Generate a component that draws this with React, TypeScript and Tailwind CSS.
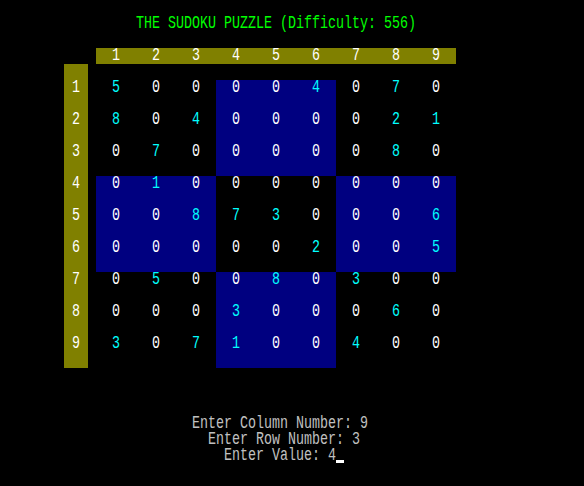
import React from 'react';

const board: number[][] = [
  [5, 0, 0, 0, 0, 4, 0, 7, 0],
  [8, 0, 4, 0, 0, 0, 0, 2, 1],
  [0, 7, 0, 0, 0, 0, 0, 8, 0],
  [0, 1, 0, 0, 0, 0, 0, 0, 0],
  [0, 0, 8, 7, 3, 0, 0, 0, 6],
  [0, 0, 0, 0, 0, 2, 0, 0, 5],
  [0, 5, 0, 0, 8, 0, 3, 0, 0],
  [0, 0, 0, 3, 0, 0, 0, 6, 0],
  [3, 0, 7, 1, 0, 0, 4, 0, 0],
];

const nums = [1, 2, 3, 4, 5, 6, 7, 8, 9];

// console glyphs are tall and narrow: 8px pitch, stretched vertically
function Glyphs({ children, className = '' }: { children: React.ReactNode; className?: string }) {
  return <span className={`inline-block scale-y-[1.4] ${className}`}>{children}</span>;
}

export default function App() {
  return (
    <div
      className="w-[584px] h-[486px] bg-black overflow-hidden text-[13.333px] leading-4 whitespace-pre"
      style={{ fontFamily: '"Liberation Mono", "DejaVu Sans Mono", monospace' }}
    >
      {/* Title */}
      <div className="pt-4 h-8 pl-[136px] text-[#00ff00]">
        <Glyphs>THE SUDOKU PUZZLE (Difficulty: 556)</Glyphs>
      </div>

      {/* Column header */}
      <div className="mt-4 ml-[96px] w-[360px] h-4 bg-[#808000] flex text-white">
        {nums.map((n) => (
          <div key={n} className="w-10 text-center">
            <Glyphs>{n}</Glyphs>
          </div>
        ))}
      </div>

      <div className="flex ml-16 gap-2">
        {/* Row header */}
        <div className="w-6 h-[304px] bg-[#808000] pt-4 text-white">
          {nums.map((n) => (
            <div key={n} className="h-8 text-center">
              <Glyphs>{n}</Glyphs>
            </div>
          ))}
        </div>

        {/* Grid */}
        <div className="pt-4">
          {board.map((row, r) => (
            <div key={r} className="flex">
              {row.map((v, c) => {
                const blue = (Math.floor(r / 3) + Math.floor(c / 3)) % 2 === 1;
                return (
                  <div
                    key={c}
                    className={`w-10 h-8 text-center ${blue ? 'bg-[#000080]' : 'bg-black'} ${
                      v ? 'text-[#00ffff]' : 'text-white'
                    }`}
                  >
                    <Glyphs>{v}</Glyphs>
                  </div>
                );
              })}
            </div>
          ))}
        </div>
      </div>

      {/* Prompts */}
      <div className="mt-12 text-[#c0c0c0]">
        <div className="h-4 pl-[192px]">
          <Glyphs>Enter Column Number: 9</Glyphs>
        </div>
        <div className="h-4 pl-[208px]">
          <Glyphs>Enter Row Number: 3</Glyphs>
        </div>
        <div className="h-4 pl-[224px] flex">
          <Glyphs>Enter Value: 4</Glyphs>
          <span className="w-2 h-[3px] mt-3 bg-white" />
        </div>
      </div>
    </div>
  );
}
